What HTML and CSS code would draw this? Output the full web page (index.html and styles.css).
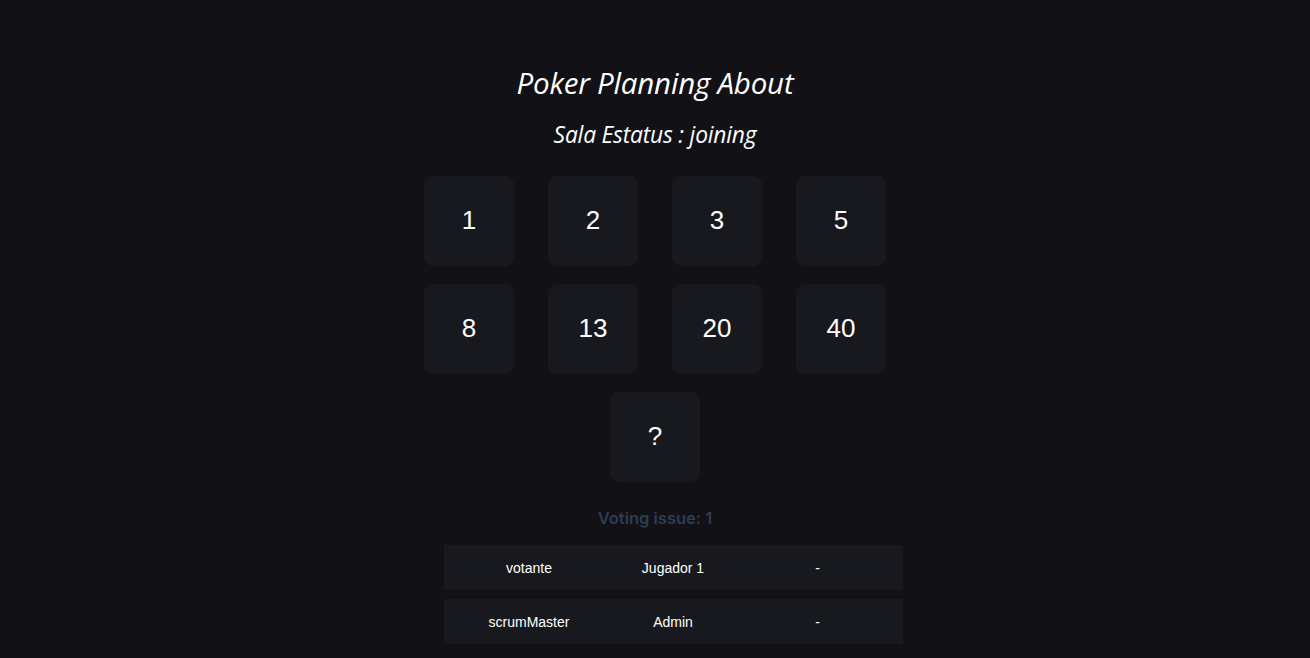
FILE: index.html
```html
<!DOCTYPE html>
<html lang="es">
<head>
<meta charset="utf-8">
<title>Poker Planning About</title>
<link rel="stylesheet" href="styles.css">
</head>
<body>
<main class="page">
  <h1 class="title">Poker Planning About</h1>
  <h2 class="status">Sala Estatus : joining</h2>
  <div class="deck">
    <button class="card">1</button>
    <button class="card">2</button>
    <button class="card">3</button>
    <button class="card">5</button>
    <button class="card">8</button>
    <button class="card">13</button>
    <button class="card">20</button>
    <button class="card">40</button>
    <button class="card">?</button>
  </div>
  <p class="issue">Voting issue: 1</p>
  <div class="players">
    <div class="row"><span class="cell">votante</span><span class="cell">Jugador 1</span><span class="cell">-</span></div>
    <div class="row"><span class="cell">scrumMaster</span><span class="cell">Admin</span><span class="cell">-</span></div>
  </div>
</main>
</body>
</html>
```

FILE: styles.css
```css
html, body {
  margin: 0;
  padding: 0;
  background: #111116;
  color: #ffffff;
  font-family: "Liberation Sans", Arial, sans-serif;
}
.page {
  display: flex;
  flex-direction: column;
  align-items: center;
  padding-top: 63px;
}
.title {
  margin: 0;
  font-family: "Open Sans", sans-serif;
  font-style: italic;
  font-weight: 500;
  font-size: 29.5px;
  line-height: 40px;
  letter-spacing: -0.2px;
}
.status {
  margin: 17px 0 0 0;
  font-family: "Open Sans", sans-serif;
  font-style: italic;
  font-weight: 500;
  font-size: 22.8px;
  line-height: 30px;
  letter-spacing: -0.2px;
}
.deck {
  display: flex;
  flex-wrap: wrap;
  justify-content: center;
  column-gap: 34px;
  row-gap: 18px;
  width: 462px;
  margin-top: 26px;
}
.card {
  width: 90px;
  height: 90px;
  border: none;
  border-radius: 9px;
  background: #18191e;
  color: #ffffff;
  font-family: "Liberation Sans", Arial, sans-serif;
  font-size: 26px;
  padding: 0 0 2px 0;
  display: flex;
  align-items: center;
  justify-content: center;
}
.issue {
  margin: 25px 0 0 0;
  font-family: Inter, sans-serif;
  font-weight: 600;
  font-size: 16.5px;
  line-height: 22px;
  color: #2e3d52;
}
.players {
  display: flex;
  flex-direction: column;
  gap: 9px;
  width: 459px;
  margin-top: 16px;
  margin-left: 37px;
}
.row {
  display: grid;
  grid-template-columns: 170px 118px 171px;
  height: 45px;
  align-items: center;
  background: #18191e;
  font-size: 14px;
}
.cell {
  text-align: center;
}
```
